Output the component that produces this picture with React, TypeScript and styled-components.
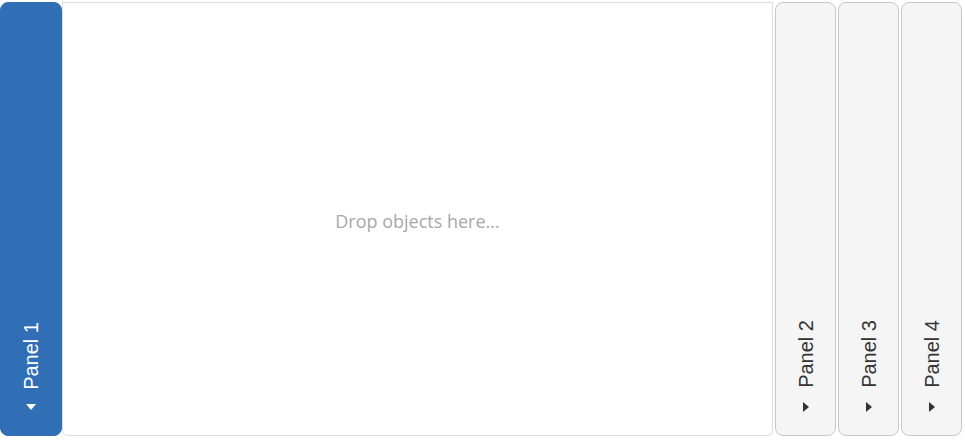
import { createGlobalStyle, styled } from "styled-components";

const GlobalStyle = createGlobalStyle`
    html, body {
        margin: 0;
        padding: 0;
        background: #ffffff;
    }
`;

const StyledAccordion = styled.div`
    display: flex;
    height: 434px;
    padding-top: 2px;
    gap: 2px;
    font-family: "Liberation Sans", Arial, sans-serif;
`;

const StyledHeader = styled.div<{ $open?: boolean }>`
    box-sizing: border-box;
    width: ${(p) => (p.$open ? "62px" : "61px")};
    flex: none;
    display: flex;
    flex-direction: column;
    align-items: center;
    justify-content: flex-end;
    gap: 14px;
    padding-bottom: 23px;
    border-radius: 8px;
    border: 1px solid ${(p) => (p.$open ? "#306eb6" : "#c8c8c8")};
    background-color: ${(p) => (p.$open ? "#306eb6" : "#f5f5f5")};
    color: ${(p) => (p.$open ? "#ffffff" : "#333333")};
    cursor: pointer;
`;

const StyledTitle = styled.span`
    writing-mode: vertical-rl;
    transform: rotate(180deg);
    font-size: 20px;
    line-height: 20px;
    white-space: nowrap;
`;

const StyledCaretDown = styled.span`
    width: 0;
    height: 0;
    border-left: 5px solid transparent;
    border-right: 5px solid transparent;
    border-top: 6px solid currentColor;
    margin-bottom: 2px;
`;

const StyledCaretRight = styled.span`
    width: 0;
    height: 0;
    margin-left: 1px;
    border-top: 5px solid transparent;
    border-bottom: 5px solid transparent;
    border-left: 6px solid currentColor;
`;

const StyledContent = styled.div`
    box-sizing: border-box;
    width: 711px;
    flex: none;
    margin-left: -2px;
    display: flex;
    align-items: center;
    justify-content: center;
    padding-top: 4px;
    border: 1px solid #dddddd;
    border-radius: 0 0 5px 5px;
    color: #a8a8a8;
    font-family: "Open Sans", "Noto Sans", sans-serif;
    font-size: 18px;
`;

const panels = ["Panel 2", "Panel 3", "Panel 4"];

export default function App() {
    return (
        <>
            <GlobalStyle />
            <StyledAccordion>
                <StyledHeader $open>
                    <StyledTitle>Panel 1</StyledTitle>
                    <StyledCaretDown />
                </StyledHeader>
                <StyledContent>Drop objects here...</StyledContent>
                {panels.map((name) => (
                    <StyledHeader key={name}>
                        <StyledTitle>{name}</StyledTitle>
                        <StyledCaretRight />
                    </StyledHeader>
                ))}
            </StyledAccordion>
        </>
    );
}
